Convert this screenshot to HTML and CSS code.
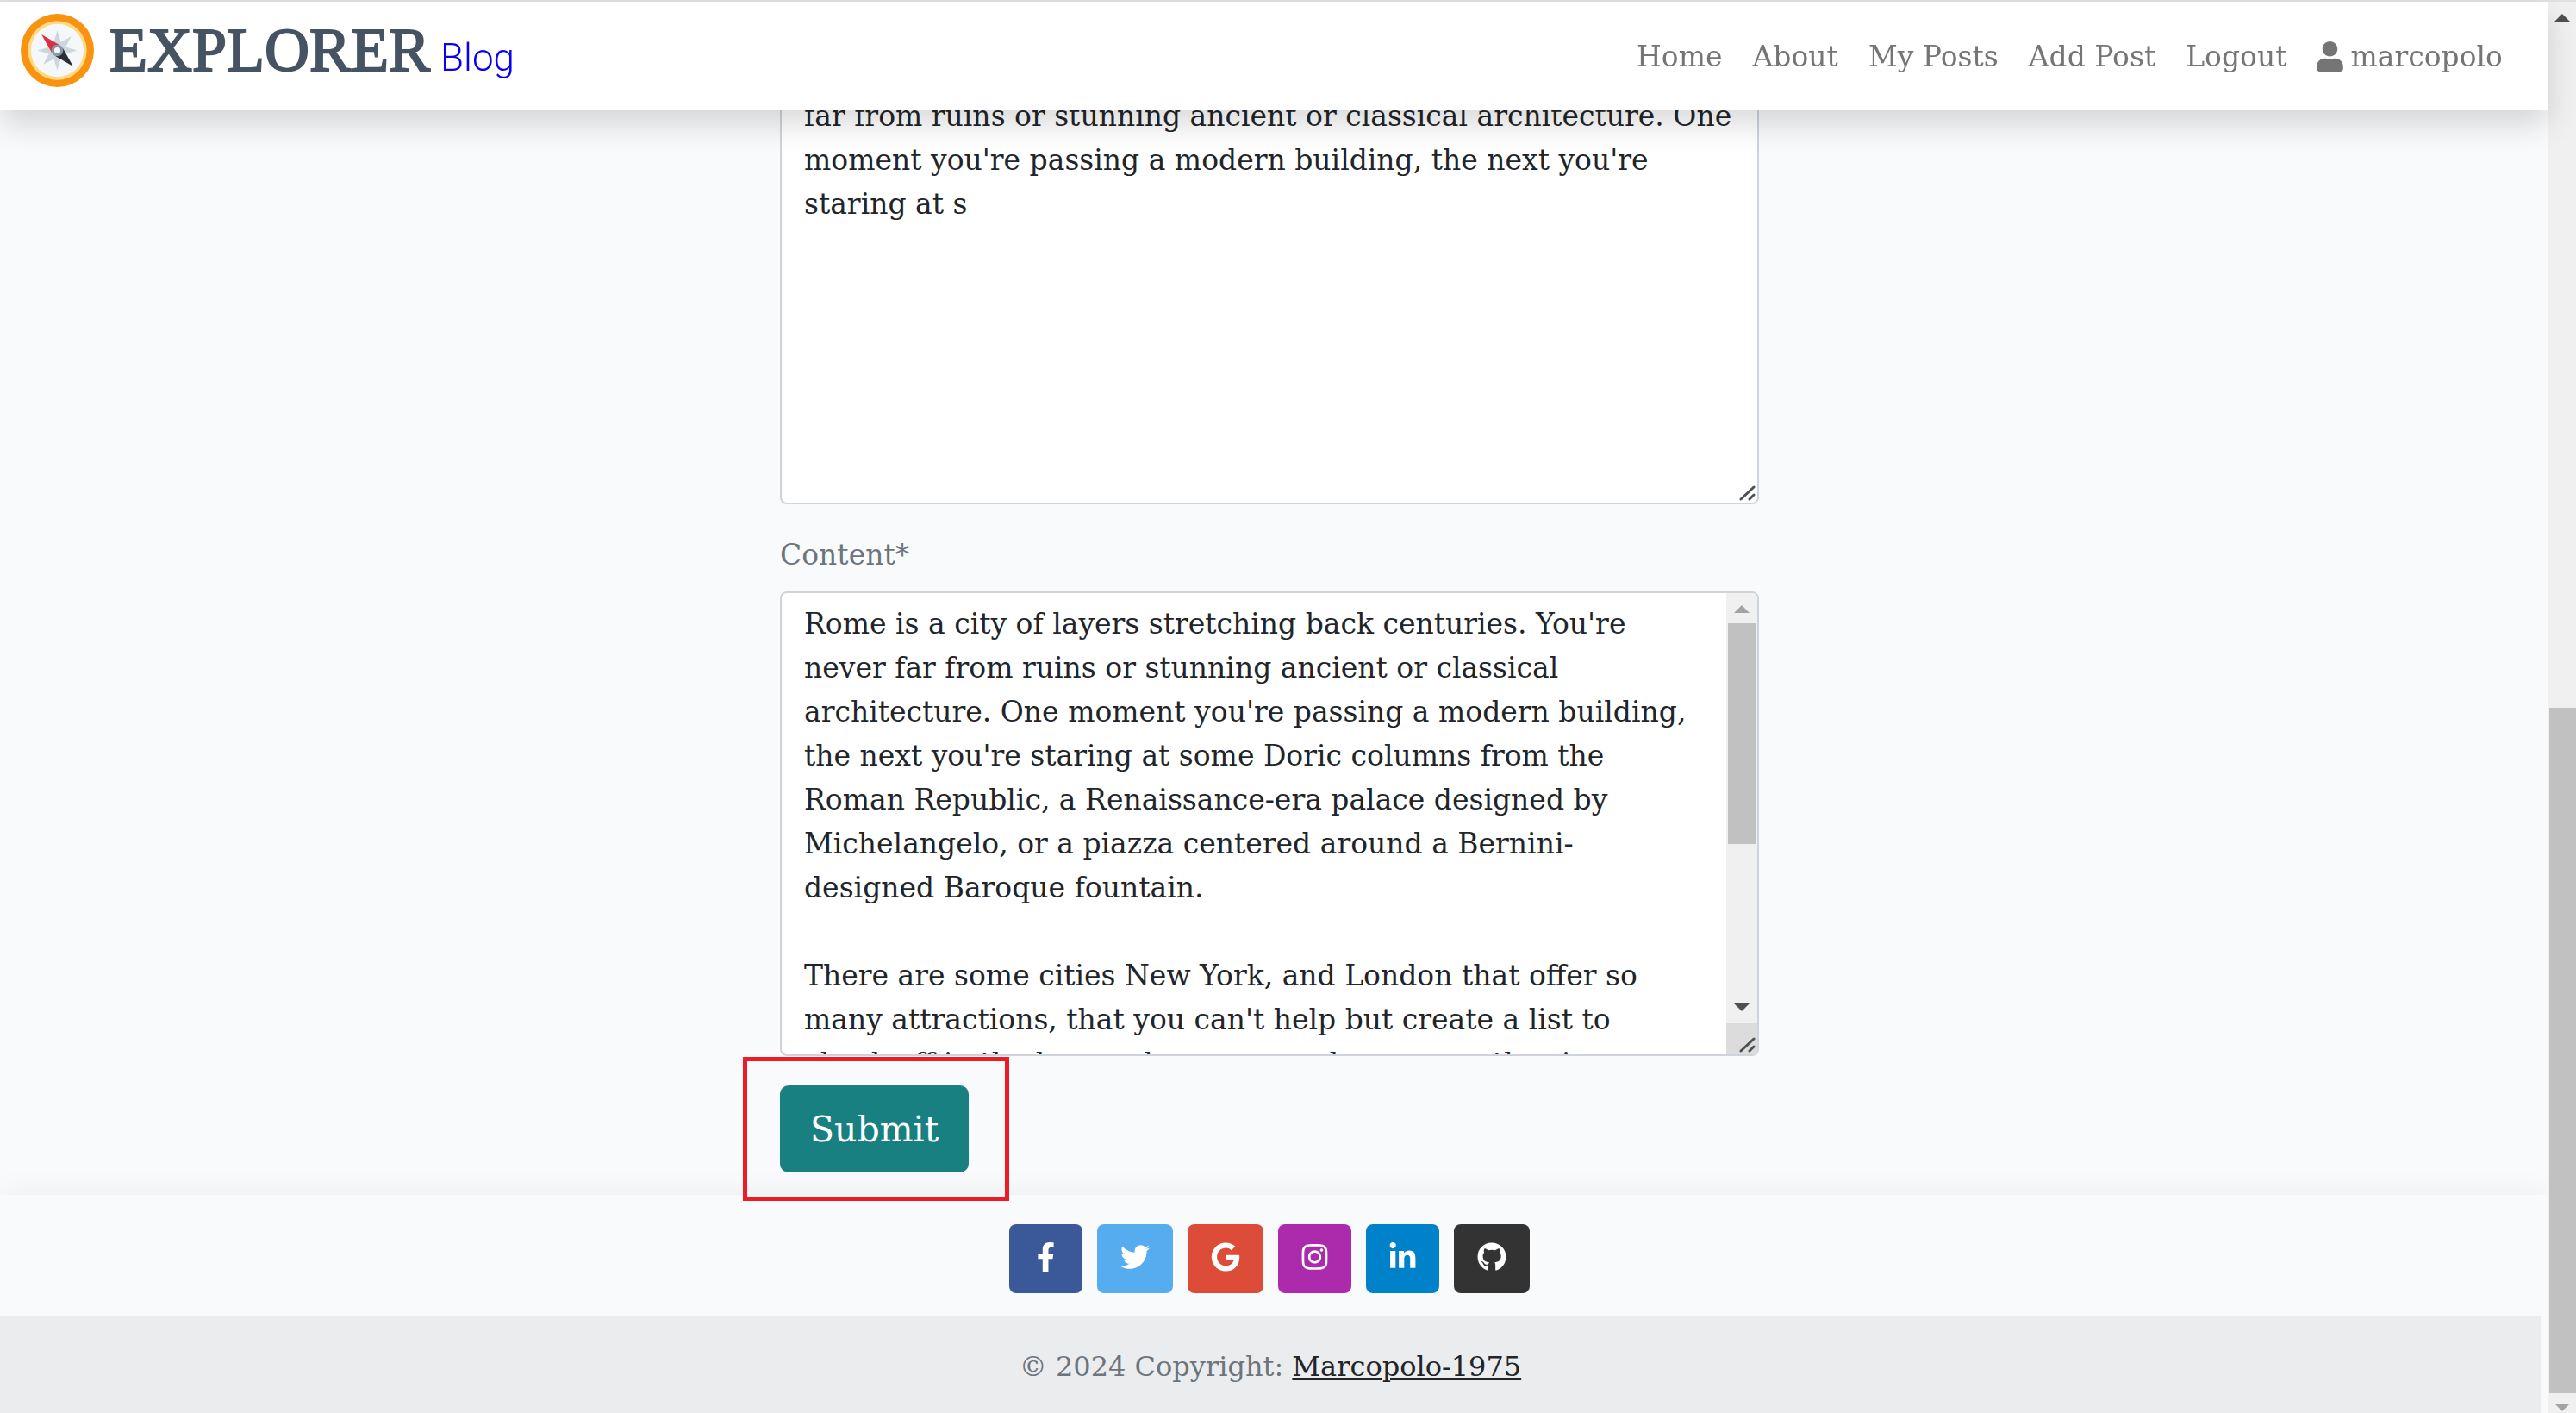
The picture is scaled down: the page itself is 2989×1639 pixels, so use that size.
FILE: index.html
```html
<!DOCTYPE html>
<html lang="en">
<head>
<meta charset="utf-8">
<title>Explorer Blog</title>
<link rel="stylesheet" href="styles.css">
</head>
<body>
<header class="navbar">
  <a class="brand" href="#">
    <svg class="brand-logo" viewBox="0 0 36 36" aria-hidden="true">
      <circle cx="18" cy="18" r="18" fill="#f7930f"/>
      <circle cx="18" cy="18" r="14.500" fill="#ffd983"/>
      <circle cx="18" cy="18" r="13" fill="#f5f8fa"/>
      <path fill="#ccd6dd" d="M18 8.300l1.700 5.600 5.200-2.800-2.800 5.200L27.700 18l-5.600 1.700 2.800 5.200-5.200-2.800L18 27.700l-1.700-5.600-5.200 2.800 2.800-5.200L8.300 18l5.600-1.700-2.800-5.200 5.200 2.800z"/>
      <path fill="#dd2e44" d="M10.200 10.200l8.800 5L15.200 19z"/>
      <path fill="#292f33" d="M25.800 25.800L17 20.800 20.800 17z"/>
      <circle cx="18" cy="18" r="2.200" fill="#f5f8fa" stroke="#8899a6" stroke-width="1.400"/>
    </svg>
    <span class="brand-name">EXPLORER</span>
    <span class="brand-sub">Blog</span>
  </a>
  <nav class="nav">
    <a href="#">Home</a>
    <a href="#">About</a>
    <a href="#">My Posts</a>
    <a href="#">Add Post</a>
    <a href="#">Logout</a>
    <a class="nav-user" href="#"><svg viewBox="0 0 448 512" aria-hidden="true"><path d="M224 256c70.700 0 128-57.300 128-128S294.700 0 224 0 96 57.300 96 128s57.300 128 128 128zm89.600 32h-16.700c-22.200 10.200-46.900 16-72.900 16s-50.600-5.800-72.900-16h-16.700C60.200 288 0 348.200 0 422.400V464c0 26.500 21.500 48 48 48h352c26.500 0 48-21.500 48-48v-41.600c0-74.200-60.200-134.400-134.400-134.400z"/></svg>marcopolo</a>
  </nav>
</header>

<div class="page">
  <main class="form-wrap">
    <form class="post-form">
      <div class="field">
        <textarea class="field-text" aria-label="Excerpt">Rome is a city of layers stretching back centuries. You're never far from ruins or stunning ancient or classical architecture. One moment you're passing a modern building, the next you're staring at s</textarea>
        <svg class="grip grip-over" viewBox="0 0 36 36" aria-hidden="true"><path d="M17 32L32 18M27 32l5-5"/></svg>
      </div>
      <label class="label" for="content">Content*</label>
      <div class="field">
        <textarea class="field-text field-text-scrolling" id="content">Rome is a city of layers stretching back centuries. You're never far from ruins or stunning ancient or classical architecture. One moment you're passing a modern building, the next you're staring at some Doric columns from the Roman Republic, a Renaissance-era palace designed by Michelangelo, or a piazza centered around a Bernini-designed Baroque fountain.

There are some cities New York, and London that offer so many attractions, that you can't help but create a list to check off in the busy urban areas, a home near the river again</textarea>
        <div class="scroll" aria-hidden="true">
          <svg class="arrow arrow-off" viewBox="0 0 18 9"><path d="M0 9L9 0l9 9z"/></svg>
          <div class="scroll-track"><div class="thumb"></div></div>
          <svg class="arrow" viewBox="0 0 18 9"><path d="M0 0h18L9 9z"/></svg>
          <svg class="grip grip-corner" viewBox="0 0 36 36"><path d="M17 32L32 18M27 32l5-5"/></svg>
        </div>
      </div>
      <div class="actions">
        <button class="submit" type="submit">Submit</button>
        <div class="highlight"></div>
      </div>
    </form>
  </main>

  <footer class="footer">
    <div class="social">
      <a class="fb" href="#" aria-label="Facebook"><svg viewBox="0 0 320 512"><path d="M279.140 288l14.220-92.660h-88.910v-60.130c0-25.350 12.420-50.060 52.240-50.060h40.420V6.260S260.430 0 225.360 0c-73.220 0-121.080 44.380-121.080 124.720v70.620H22.890V288h81.390v224h100.170V288z"/></svg></a>
      <a class="tw" href="#" aria-label="Twitter"><svg viewBox="0 0 512 512"><path d="M459.370 151.716c.325 4.548.325 9.097.325 13.645 0 138.720-105.583 298.558-298.558 298.558-59.452 0-114.680-17.219-161.137-47.106 8.447.974 16.568 1.299 25.340 1.299 49.055 0 94.213-16.568 130.274-44.832-46.132-.975-84.792-31.188-98.112-72.772 6.498.974 12.995 1.624 19.818 1.624 9.421 0 18.843-1.300 27.614-3.573-48.081-9.747-84.143-51.980-84.143-102.985v-1.299c13.969 7.797 30.214 12.670 47.431 13.319-28.264-18.843-46.781-51.005-46.781-87.391 0-19.492 5.197-37.360 14.294-52.954 51.655 63.675 129.300 105.258 216.365 109.807-1.624-7.797-2.599-15.918-2.599-24.040 0-57.828 46.782-104.934 104.934-104.934 30.213 0 57.502 12.670 76.670 33.137 23.715-4.548 46.456-13.320 66.599-25.340-7.798 24.366-24.366 44.833-46.132 57.827 21.117-2.273 41.584-8.122 60.426-16.243-14.292 20.791-32.161 39.308-52.628 54.253z"/></svg></a>
      <a class="gg" href="#" aria-label="Google"><svg viewBox="0 0 488 512"><path d="M488 261.800C488 403.300 391.100 504 248 504 110.800 504 0 393.200 0 256S110.800 8 248 8c66.800 0 123 24.500 166.300 64.900l-67.500 64.900C258.500 52.600 94.300 116.600 94.300 256c0 86.500 69.100 156.600 153.700 156.600 98.200 0 135-70.400 140.800-106.900H248v-85.300h236.100c2.300 12.700 3.900 24.900 3.900 41.400z"/></svg></a>
      <a class="ig" href="#" aria-label="Instagram"><svg viewBox="0 0 448 512"><path d="M224.100 141c-63.600 0-114.900 51.300-114.900 114.900s51.300 114.900 114.900 114.900S339 319.500 339 255.900 287.700 141 224.100 141zm0 189.600c-41.100 0-74.700-33.500-74.700-74.700s33.500-74.700 74.700-74.700 74.700 33.500 74.700 74.700-33.600 74.700-74.700 74.700zm146.400-194.300c0 14.900-12 26.800-26.800 26.800-14.900 0-26.800-12-26.800-26.800s12-26.800 26.800-26.800 26.800 12 26.800 26.800zm76.100 27.200c-1.700-35.900-9.900-67.700-36.200-93.900-26.200-26.200-58-34.400-93.900-36.200-37-2.100-147.900-2.100-184.900 0-35.800 1.700-67.600 9.900-93.900 36.100s-34.400 58-36.200 93.900c-2.100 37-2.100 147.900 0 184.900 1.700 35.900 9.900 67.700 36.200 93.900s58 34.400 93.900 36.200c37 2.100 147.900 2.100 184.900 0 35.900-1.700 67.700-9.900 93.900-36.200 26.200-26.200 34.400-58 36.200-93.900 2.100-37 2.100-147.800 0-184.800zM398.800 388c-7.800 19.600-22.900 34.700-42.600 42.600-29.500 11.700-99.500 9-132.100 9s-102.700 2.600-132.100-9c-19.600-7.800-34.700-22.900-42.600-42.600-11.700-29.500-9-99.500-9-132.100s-2.600-102.700 9-132.100c7.800-19.600 22.900-34.700 42.600-42.600 29.500-11.700 99.500-9 132.100-9s102.700-2.600 132.100 9c19.600 7.800 34.700 22.900 42.600 42.600 11.700 29.500 9 99.500 9 132.100s2.700 102.700-9 132.100z"/></svg></a>
      <a class="li" href="#" aria-label="LinkedIn"><svg viewBox="0 0 448 512"><path d="M100.280 448H7.400V148.900h92.880zM53.790 108.100C24.090 108.100 0 83.500 0 53.800a53.790 53.790 0 0 1 107.580 0c0 29.700-24.100 54.300-53.790 54.300zM447.900 448h-92.680V302.400c0-34.700-.7-79.200-48.290-79.200-48.290 0-55.690 37.700-55.690 76.700V448h-92.780V148.900h89.080v40.800h1.300c12.400-23.500 42.690-48.300 87.880-48.300 94 0 111.280 61.900 111.280 142.300V448z"/></svg></a>
      <a class="gh" href="#" aria-label="GitHub"><svg viewBox="0 0 496 512"><path d="M165.900 397.400c0 2-2.300 3.600-5.200 3.600-3.300.3-5.600-1.300-5.600-3.600 0-2 2.300-3.600 5.200-3.600 3-.3 5.600 1.300 5.600 3.600zM244.800 8C106.100 8 0 113.300 0 252c0 110.900 69.800 205.800 169.500 239.200 12.800 2.300 17.300-5.600 17.300-12.100 0-6.200-.3-40.400-.3-61.400 0 0-70 15-84.700-29.800 0 0-11.400-29.100-27.800-36.600 0 0-22.900-15.700 1.600-15.400 0 0 24.900 2 38.600 25.800 21.900 38.600 58.600 27.500 72.900 20.900 2.300-16 8.800-27.100 16-33.700-55.900-6.200-112.300-14.300-112.300-110.500 0-27.500 7.600-41.300 23.600-58.900-2.600-6.500-11.100-33.300 2.600-67.900 20.900-6.500 69 27 69 27 20-5.600 41.500-8.500 62.800-8.500s42.800 2.900 62.800 8.500c0 0 48.100-33.600 69-27 13.700 34.700 5.200 61.400 2.600 67.900 16 17.700 25.800 31.500 25.800 58.900 0 96.500-58.900 104.200-114.800 110.500 9.200 7.900 17 22.900 17 46.400 0 33.700-.3 75.400-.3 83.600 0 6.500 4.600 14.400 17.300 12.100C428.200 457.800 496 362.900 496 252 496 113.300 383.500 8 244.800 8z"/></svg></a>
    </div>
    <p class="copyright">© 2024 Copyright: <a href="#">Marcopolo-1975</a></p>
  </footer>
</div>

<div class="window-scroll" aria-hidden="true">
  <svg class="arrow" viewBox="0 0 18 9"><path d="M0 9L9 0l9 9z"/></svg>
  <div class="scroll-track window-track"><div class="thumb"></div></div>
  <svg class="arrow arrow-off" viewBox="0 0 18 9"><path d="M0 0h18L9 9z"/></svg>
</div>
</body>
</html>
```
FILE: styles.css
```css
* { box-sizing: border-box; }

html { overflow: hidden; }

body {
  margin: 0;
  height: 100vh;
  overflow: hidden;
  background: #f8fafc;
  color: #212529;
  font-family: "DejaVu Serif", serif;
  font-size: 33px;
  line-height: 51px;
  border-top: 2px solid #e1e1e1;
}

/* Top bar */
.navbar {
  position: fixed;
  z-index: 2;
  top: 2px;
  left: 0;
  right: 33px;
  height: 126px;
  padding: 0 52px 0 24px;
  display: flex;
  justify-content: space-between;
  align-items: center;
  background: #fff;
  box-shadow: 0 16px 34px rgba(0, 0, 0, .15);
}

.brand {
  display: flex;
  align-items: baseline;
  gap: 12px;
  margin-bottom: 14px;
  text-decoration: none;
}

.brand-logo {
  width: 85px;
  height: 85px;
  align-self: center;
  margin-right: 6px;
}

.brand-name {
  color: #465362;
  font-family: "Liberation Serif", serif;
  font-size: 72px;
  line-height: 84px;
  -webkit-text-stroke: 2px #465362;
}

.brand-sub {
  color: #0a00f5;
  font-family: Roboto, sans-serif;
  font-size: 44px;
  font-weight: 300;
}

.nav {
  display: flex;
  gap: 35px;
}

.nav a {
  color: #757575;
  text-decoration: none;
  white-space: nowrap;
}

.nav-user {
  display: flex;
  align-items: center;
  gap: 8px;
}

.nav-user svg {
  width: 31px;
  height: 35px;
  fill: #757575;
}

/* Page content, already scrolled down */
.page {
  margin-right: 33px;
  padding-top: 44px;
}

.form-wrap {
  padding-right: 10px;
}

.post-form {
  width: 1136px;
  margin: 0 auto;
}

.field {
  position: relative;
  display: flex;
  height: 539px;
  overflow: hidden;
  background: #fff;
  border: 2px solid #ced4da;
  border-radius: 8px;
}

.field-text {
  flex: 1;
  min-width: 0;
  padding: 10px 26px;
  overflow: hidden;
  resize: none;
  border: 0;
  outline: 0;
  background: none;
  color: inherit;
  font: inherit;
}

.field-text-scrolling { padding-right: 36px; }

.label {
  display: block;
  padding: 33px 0 17px;
  color: #6c757d;
}

.scroll {
  width: 36px;
  display: flex;
  flex-direction: column;
  align-items: center;
  padding-top: 14px;
  background: #f0f0f0;
}

.scroll-track {
  flex: 1;
  align-self: stretch;
  padding: 12px 2px 0;
}

.thumb {
  height: 256px;
  background: #c1c1c1;
}

.arrow {
  width: 18px;
  height: 9px;
  fill: #505050;
}

.arrow-off { fill: #a3a3a3; }

.grip {
  width: 36px;
  height: 36px;
  fill: none;
  stroke: #505050;
  stroke-width: 3;
  stroke-linecap: round;
}

.grip-over {
  position: absolute;
  right: 0;
  bottom: 0;
}

.grip-corner {
  margin-top: 14px;
  background: #dcdcdc;
}

.actions {
  position: relative;
  padding: 34px 0 26px;
}

.submit {
  display: block;
  height: 101px;
  padding: 0 35px;
  border: 0;
  border-radius: 10px;
  background: #188080;
  color: #fff;
  font-family: inherit;
  font-size: 41px;
}

.highlight {
  position: absolute;
  top: 1px;
  left: -43px;
  width: 309px;
  height: 167px;
  border: 5px solid #ed1c24;
}

/* Footer */
.footer {
  box-shadow: 0 0 34px rgba(0, 0, 0, .06);
  background: #f8fafc;
}

.social {
  display: flex;
  justify-content: center;
  gap: 17px;
  padding: 34px 10px 26px 0;
}

.social a {
  height: 80px;
  padding: 0 27px 4px;
  display: flex;
  align-items: center;
  border-radius: 8px;
}

.social svg {
  width: 34px;
  height: 34px;
  fill: #fff;
}

.fb { background: #3b5998; }
.tw { background: #55acee; }
.gg { background: #dd4b39; }
.ig { background: #ac2bac; }
.li { background: #0082ca; }
.gh { background: #333; }

.social .fb svg,
.social .ig svg,
.social .li svg { width: 31px; }

.copyright {
  margin: 0 8px 0 0;
  padding: 34px 0;
  text-align: center;
  font-size: 32px;
  color: #6c757d;
  background: #ebecee;
}

.copyright a {
  color: #212529;
  text-decoration-thickness: 3px;
}

/* Window scrollbar */
.window-scroll {
  position: fixed;
  top: 2px;
  right: 0;
  bottom: 0;
  width: 33px;
  padding: 14px 0 2px;
  display: flex;
  flex-direction: column;
  align-items: center;
  background: #f0f0f0;
}

.window-track {
  display: flex;
  flex-direction: column;
  justify-content: flex-end;
  padding: 0 0 12px 2px;
}

.window-track .thumb { height: 50%; }
```
